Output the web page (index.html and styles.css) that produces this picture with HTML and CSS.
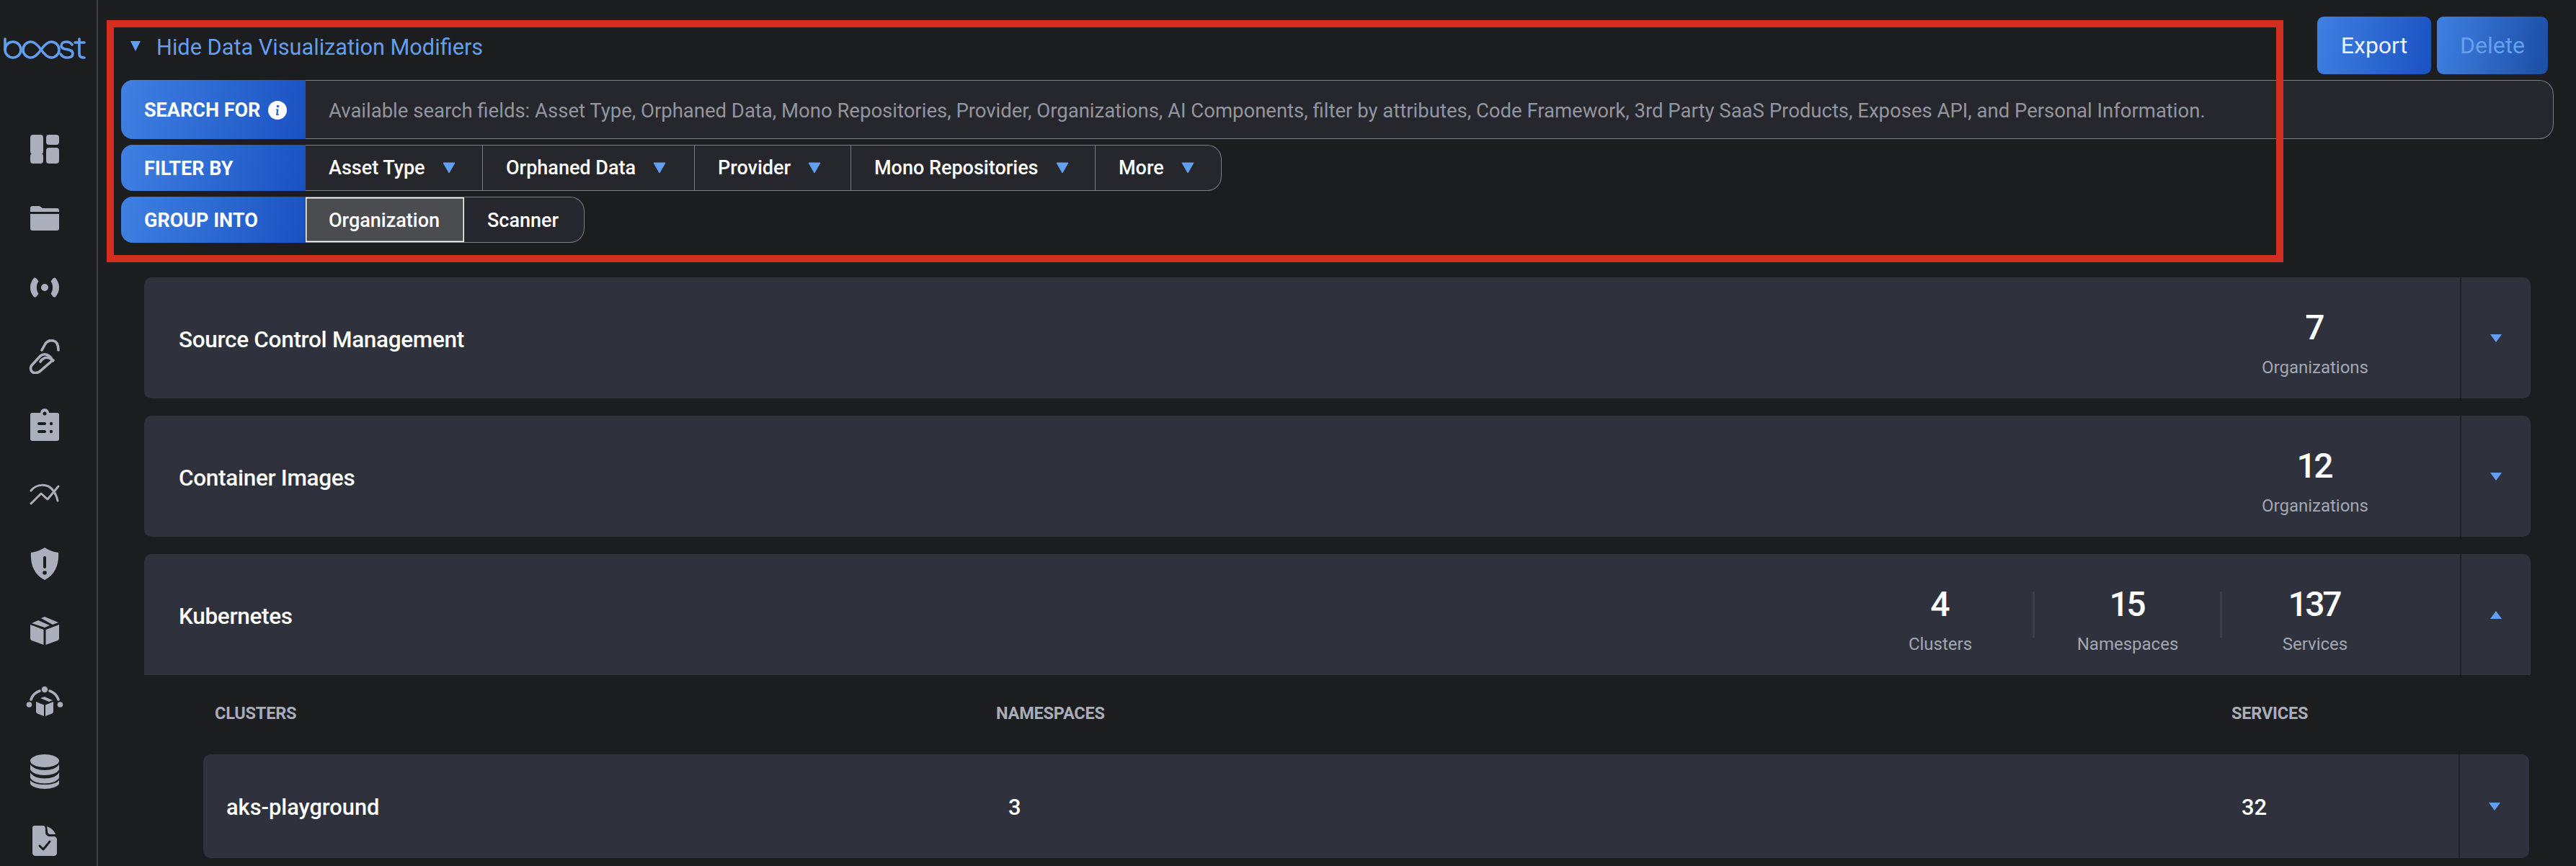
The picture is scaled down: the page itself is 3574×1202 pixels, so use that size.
FILE: index.html
```html
<!DOCTYPE html>
<html lang="en">
<head>
<meta charset="utf-8">
<title>Boost</title>
<link rel="stylesheet" href="styles.css">
</head>
<body>
<aside class="sidebar">
  <div class="logo">
    <svg viewBox="0 0 134 50" width="134" height="50" fill="none" stroke="#5f9ef0" stroke-width="3.6" stroke-linecap="round">
      <path d="M7 14V29"/><circle cx="18" cy="29" r="11"/>
      <path d="M57 29C52 22 48 18 43 18A11 11 0 0 0 43 40C48 40 52 36 57 29C62 22 66 18 71 18A11 11 0 0 1 71 40C66 40 62 36 57 29"/>
      <path d="M100 22C98 19 95 18 92 18C88 18 85 20 85 23.500C85 31 101 26 101 34.500C101 38 98 40 93 40C89 40 86 38 84 35"/>
      <path d="M110 14V34C110 39 112 40 117 40M104 19H117"/>
    </svg>
  </div>
  <nav class="nav">
    <div class="nav-item"><svg class="ico" viewBox="0 0 48 48"><rect x="4" y="4" width="18" height="27" rx="4"/><rect x="26" y="4" width="18" height="14" rx="4"/><rect x="4" y="30" width="18" height="14" rx="4"/><rect x="26" y="22" width="18" height="22" rx="4"/></svg></div>
    <div class="nav-item"><svg class="ico" viewBox="0 0 48 48"><path d="M4 10a3 3 0 0 1 3-3h10l4 3h20a3 3 0 0 1 3 3v2H4z"/><path d="M4 18h40v20a3 3 0 0 1-3 3H7a3 3 0 0 1-3-3z"/></svg></div>
    <div class="nav-item"><svg class="ico" viewBox="0 0 48 48"><circle cx="24" cy="24" r="5"/><path d="M9 11C10 10 12 11 13 12L15.500 15.500C12 20 12 28 15.500 32.500L13 36C12 37.500 10 38 9 37C5 32 4 28 4 24C4 20 5 16 9 11z"/><path d="M39 11C38 10 36 11 35 12L32.500 15.500C36 20 36 28 32.500 32.500L35 36C36 37.500 38 38 39 37C43 32 44 28 44 24C44 20 43 16 39 11z"/></svg></div>
    <div class="nav-item"><svg class="ico line" viewBox="0 0 48 48" stroke-width="3.600"><path d="M20 15L25 6C28 2 32 1 36 2C41 3 43 8 43 15"/><path d="M35 30C32 22 24 18 18 23L6 36C3 40 5 46 10 46.500C14 47 17 45 19 43L34 30"/><path d="M18 31C21 26 26 24 30 26L36 29"/></svg></div>
    <div class="nav-item"><svg class="ico" viewBox="0 0 48 48"><path d="M7 6h11a6 6 0 0 1 12 0h11a3 3 0 0 1 3 3v33a3 3 0 0 1-3 3H7a3 3 0 0 1-3-3V9a3 3 0 0 1 3-3z"/><circle cx="24" cy="7" r="2.500" fill="#1c1d1f"/><rect x="14" y="19" width="12" height="4" rx="2" fill="#1c1d1f"/><circle cx="33" cy="21" r="2.200" fill="#1c1d1f"/><rect x="14" y="30" width="12" height="4" rx="2" fill="#1c1d1f"/><circle cx="33" cy="32" r="2.200" fill="#1c1d1f"/></svg></div>
    <div class="nav-item"><svg class="ico line" viewBox="0 0 48 48" stroke-width="3"><path d="M5 18C13 8 28 8 35 17C39 22 41 27 42 32"/><path d="M5 36L19 22L28 30L43 12"/></svg></div>
    <div class="nav-item"><svg class="ico" viewBox="0 0 48 48"><path d="M24 1C30 5 36 7 43 8C44 22 40 38 24 46C8 38 4 22 5 8C12 7 18 5 24 1z"/><rect x="22" y="13" width="4" height="17" rx="2" fill="#1c1d1f"/><circle cx="24" cy="36" r="2.800" fill="#1c1d1f"/></svg></div>
    <div class="nav-item"><svg class="ico" viewBox="0 0 48 48"><path d="M4 12L22.500 19V40L6 34a3 3 0 0 1-2-3z"/><path d="M44 12L25.500 19V40L42 34a3 3 0 0 0 2-3z"/><path d="M6 10L15 6L31 13L24 16z"/><path d="M19 3L24 1L43 9L35 12z"/></svg></div>
    <div class="nav-item"><svg class="ico wide" viewBox="0 0 52 48"><circle cx="26" cy="6" r="4.200"/><circle cx="4.500" cy="27" r="3.800"/><circle cx="47.500" cy="27" r="3.800"/><path class="arc" d="M19 8C13 10 9 14 7 20"/><path class="arc" d="M33 8C39 10 43 14 45 20"/><path d="M14 23L25 27.500V43L16 39.500a3 3 0 0 1-2-2.500z"/><path d="M38 23L27 27.500V43L36 39.500a3 3 0 0 0 2-2.500z"/><path d="M20 18L26 16L37 21L32 23z"/></svg></div>
    <div class="nav-item"><svg class="ico" viewBox="0 0 48 48"><ellipse cx="24" cy="9" rx="20" ry="9"/><path d="M4 14c3 5 11 8 20 8s17-3 20-8v7c-2 5-11 8-20 8S6 26 4 21z"/><path d="M4 25c3 5 11 8 20 8s17-3 20-8v7c-2 5-11 8-20 8S6 37 4 32z" transform="translate(0 .5)"/><path d="M4 36c3 4 11 6 20 6s17-2 20-6v5c-2 4-11 7-20 7S6 45 4 41z"/></svg></div>
    <div class="nav-item"><svg class="ico" viewBox="0 0 48 48"><path d="M10 3H22C24 3 25 5 25 8V12C25 16 28 18 32 18H37C39 18 41 20 41 22V41C41 43 39 45 37 45H11C9 45 7 43 7 41V6C7 4 8 3 10 3z"/><path d="M27 4C33 6 38 11 39 15H33C29 15 28 13 28 10z"/><path d="M17 31L22 36L31 25" fill="none" stroke="#1c1d1f" stroke-width="3" stroke-linecap="round" stroke-linejoin="round"/></svg></div>
  </nav>
</aside>

<main class="main">
  <div class="highlight"></div>

  <header class="topbar">
    <div class="toggle-mod">
      <svg class="caret-hide" viewBox="0 0 16 16" width="16" height="16"><path d="M1 1H15L8 15z"/></svg>
      <span>Hide Data Visualization Modifiers</span>
    </div>
    <div class="actions">
      <button class="btn btn-export">Export</button>
      <button class="btn btn-delete"><span>Delete</span></button>
    </div>
  </header>

  <section class="modifiers">
    <div class="mod-row search-row">
      <div class="mod-label">SEARCH FOR
        <svg class="info" viewBox="0 0 26 26" width="26" height="26"><circle cx="13" cy="13" r="13" fill="#fff"/><circle cx="13.500" cy="7.500" r="1.800" fill="#2a63cc"/><path d="M11 11.500h3.500l-1 7h1.500v1.500h-4l1-7H11z" fill="#2a63cc"/></svg>
      </div>
      <div class="mod-body search-body">Available search fields: Asset Type, Orphaned Data, Mono Repositories, Provider, Organizations, AI Components, filter by attributes, Code Framework, 3rd Party SaaS Products, Exposes API, and Personal Information.</div>
    </div>
    <div class="mod-row filter-row">
      <div class="mod-label">FILTER BY</div>
      <div class="mod-body segs filter-segs">
        <div class="seg"><span>Asset Type</span><svg class="caret" viewBox="0 0 18 16"><path d="M1 1H17L9 15z"/></svg></div>
        <div class="seg"><span>Orphaned Data</span><svg class="caret" viewBox="0 0 18 16"><path d="M1 1H17L9 15z"/></svg></div>
        <div class="seg"><span>Provider</span><svg class="caret" viewBox="0 0 18 16"><path d="M1 1H17L9 15z"/></svg></div>
        <div class="seg"><span>Mono Repositories</span><svg class="caret" viewBox="0 0 18 16"><path d="M1 1H17L9 15z"/></svg></div>
        <div class="seg"><span>More</span><svg class="caret" viewBox="0 0 18 16"><path d="M1 1H17L9 15z"/></svg></div>
      </div>
    </div>
    <div class="mod-row group-row">
      <div class="mod-label">GROUP INTO</div>
      <div class="mod-body segs group-segs">
        <div class="seg seg-active"><span>Organization</span></div>
        <div class="seg seg-plain"><span>Scanner</span></div>
      </div>
    </div>
  </section>

  <section class="cards">
    <article class="card">
      <h2 class="card-title">Source Control Management</h2>
      <div class="stats">
        <div class="stat"><div class="stat-num">7</div><div class="stat-label">Organizations</div></div>
      </div>
      <div class="card-toggle"><svg class="tri" viewBox="0 0 16 11"><path d="M0 0H16L8 11z"/></svg></div>
    </article>
    <article class="card">
      <h2 class="card-title">Container Images</h2>
      <div class="stats">
        <div class="stat"><div class="stat-num">12</div><div class="stat-label">Organizations</div></div>
      </div>
      <div class="card-toggle"><svg class="tri" viewBox="0 0 16 11"><path d="M0 0H16L8 11z"/></svg></div>
    </article>
    <div class="open-group">
      <article class="card card-open">
        <h2 class="card-title">Kubernetes</h2>
        <div class="stats">
          <div class="stat stat-sep"><div class="stat-num">4</div><div class="stat-label">Clusters</div></div>
          <div class="stat stat-sep"><div class="stat-num">15</div><div class="stat-label">Namespaces</div></div>
          <div class="stat"><div class="stat-num">137</div><div class="stat-label">Services</div></div>
        </div>
        <div class="card-toggle"><svg class="tri" viewBox="0 0 16 11"><path d="M8 0L16 11H0z"/></svg></div>
      </article>
      <div class="sub-head">
        <div>CLUSTERS</div>
        <div>NAMESPACES</div>
        <div>SERVICES</div>
      </div>
      <article class="sub-card">
        <div class="sub-name">aks-playground</div>
        <div class="sub-val">3</div>
        <div class="sub-val">32</div>
        <div class="card-toggle"><svg class="tri" viewBox="0 0 16 11"><path d="M0 0H16L8 11z"/></svg></div>
      </article>
    </div>
  </section>
</main>
</body>
</html>
```

FILE: styles.css
```css
* { box-sizing: border-box; }
html, body { margin: 0; height: 1202px; overflow: hidden; }
body {
  display: flex;
  background: #1c1d1f;
  color: #fff;
  font-family: Roboto, "Liberation Sans", sans-serif;
}

/* sidebar */
.sidebar { width: 136px; flex: none; height: 1202px; border-right: 2px solid #3e3f49; }
.logo { height: 159px; padding-top: 40px; }
.logo svg { display: block; }
.nav-item { height: 96px; display: flex; align-items: center; justify-content: center; padding-right: 10px; }
.ico { width: 48px; height: 48px; fill: #abaebb; }
.ico.wide { width: 52px; }
.ico.line { fill: none; stroke: #abaebb; stroke-linecap: round; stroke-linejoin: round; }
.arc { fill: none; stroke: #abaebb; stroke-width: 3.600; stroke-linecap: round; }

/* main */
.main { flex: 1; position: relative; padding: 0 31px 0 32px; min-width: 0; }
.highlight {
  position: absolute;
  left: 12px; top: 28px;
  width: 3020px; height: 336px;
  border: 10px solid #d32f20;
  z-index: 2;
}

.topbar { height: 111px; padding-top: 23px; display: flex; justify-content: space-between; align-items: flex-start; }
.toggle-mod { display: flex; align-items: center; gap: 21px; padding: 25px 0 0 12px; color: #639ff0; font-size: 30.700px; line-height: 36px; }
.caret-hide { fill: #639ff0; position: relative; top: -2px; }
.actions { display: flex; gap: 8px; margin-right: 8px; }
.btn {
  height: 80px; border: 0; border-radius: 9px;
  background: linear-gradient(100deg, #3f80e2, #1a52c2);
  color: #e8f0fd; font: 400 32px Roboto, sans-serif;
  padding: 0;
}
.btn-export { width: 158px; }
.btn-delete { width: 154px; background: linear-gradient(100deg, #3f80e2, #1b4ea5); }
.btn-delete span { color: #66a0ee; }

.modifiers { display: flex; flex-direction: column; gap: 8px; }
.mod-row { display: flex; height: 64px; }
.search-row { height: 82px; }
.mod-label {
  width: 256px; flex: none;
  display: flex; align-items: center; gap: 11px;
  padding: 1px 0 0 32px;
  background: linear-gradient(100deg, #3f80e2, #1a52c2);
  border-radius: 16px 0 0 16px;
  font-size: 27px; font-weight: 700;
}
.mod-body {
  background: #26272d;
  border: 1px solid #7b7c88;
  border-left: 0;
  border-radius: 0 20px 20px 0;
}
.search-body {
  flex: 1;
  display: flex; align-items: center;
  padding: 2px 0 0 32px;
  color: #92959f; font-size: 27.500px;
  white-space: nowrap;
}
.segs { display: grid; font-size: 27px; overflow: hidden; }
.filter-segs { grid-template-columns: 246px 294px 217px 339px 174px; }
.group-segs { grid-template-columns: 220px 166px; }
.seg {
  display: flex; align-items: center; gap: 24px;
  padding-left: 32px;
  border-right: 1px solid #7b7c88;
  white-space: nowrap;
  font-weight: 500;
}
.seg:last-child { border-right: 0; }
.caret { width: 18px; height: 16px; fill: #639ff0; stroke: #639ff0; stroke-width: 1; stroke-linejoin: round; flex: none; }
.seg-active { background: #4b4c4f; box-shadow: inset 0 0 0 1.500px #fff; border-right: 0; }
.group-segs .seg span { position: relative; top: 1px; }

/* cards */
.cards { display: flex; flex-direction: column; gap: 24px; margin: 48px 32px 0 32px; }
.card {
  display: flex; align-items: stretch;
  height: 168px;
  background: #2f323c;
  border-radius: 10px;
}
.card-open { border-radius: 10px 10px 0 0; }
.card-title { flex: 1; margin: 0; align-self: center; padding: 4px 0 0 48px; font-size: 31.500px; letter-spacing: -.3px; font-weight: 500; }
.stats { display: flex; align-items: center; padding-right: 71px; }
.stat { width: 260px; height: 100%; text-align: center; padding-top: 46px; position: relative; }
.stat-sep::after { content: ""; position: absolute; right: -1px; top: 52px; width: 3px; height: 64px; background: #3b3e49; }
.stat-num { font-size: 48px; line-height: 48px; font-weight: 500; letter-spacing: -3.500px; margin-left: -3.500px; }
.stat-label { margin-top: 15px; font-size: 24px; line-height: 32px; color: #a3a6b3; }
.card-toggle { width: 98px; flex: none; display: flex; align-items: center; justify-content: center; border-left: 2px solid #1f2126; }
.tri { width: 16px; height: 11px; fill: #639ff0; }

.sub-head {
  display: grid;
  grid-template-columns: 1084px 1714px 1fr;
  height: 110px;
  padding: 0 0 4px 98px;
  align-items: center;
  color: #a9acb9; font-size: 23.500px; font-weight: 700; letter-spacing: -.2px;
}
.sub-card {
  display: grid;
  grid-template-columns: 1085px 1711px 1fr 98px;
  align-items: center;
  height: 144px;
  margin: 0 2px 0 82px;
  background: #2f323c;
  border-radius: 10px;
  padding-left: 32px;
  font-size: 30.800px; font-weight: 500;
}
.sub-name, .sub-val { padding-top: 2px; }
.sub-card .card-toggle { height: 100%; }
```
